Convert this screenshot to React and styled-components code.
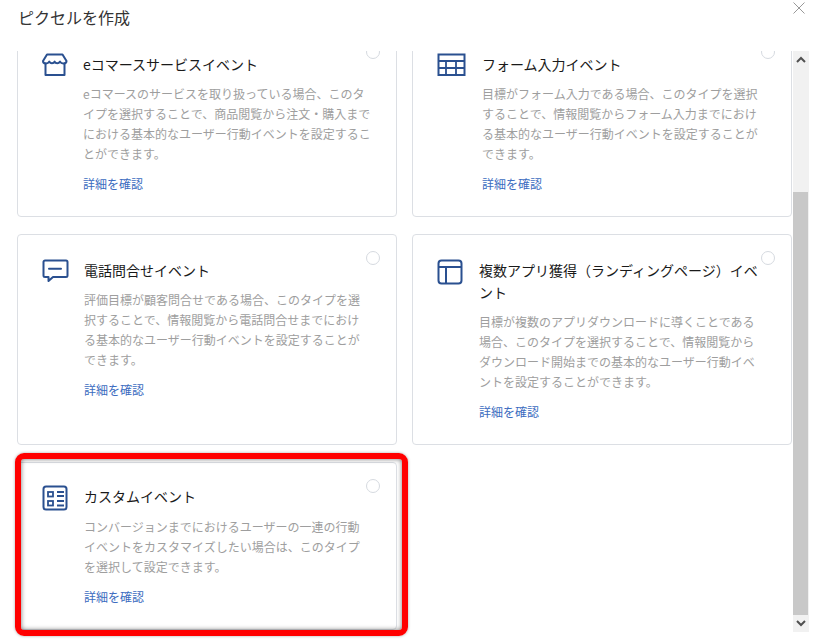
import React from 'react';
import styled, { createGlobalStyle } from 'styled-components';

const Global = createGlobalStyle`
  html, body { margin: 0; padding: 0; background: #fff; overflow: hidden; }
  body { font-family: "Noto Sans CJK JP", "Liberation Sans", sans-serif; }
`;

const Modal = styled.div`
  position: relative;
  width: 817px;
  height: 643px;
  display: flex;
  flex-direction: column;
  overflow: hidden;
  background: #fff;
`;

const Header = styled.header`
  height: 51px;
  flex: none;
  display: flex;
  justify-content: space-between;
  align-items: flex-start;
  padding: 6px 12px 0 18px;
  box-sizing: border-box;
`;

const Title = styled.h2`
  margin: 0;
  font-size: 16px;
  line-height: 22px;
  font-weight: 400;
  color: #333;
`;

const Close = styled.button`
  border: 0;
  background: none;
  padding: 0;
  margin-top: -4px;
  width: 12px;
  height: 12px;
  color: #999;
  display: flex;
`;

const Body = styled.div`
  flex: none;
  height: 581px;
  display: flex;
  padding-left: 17px;
  box-sizing: border-box;
`;

const Scroller = styled.div`
  width: 776px;
  flex: none;
  overflow: hidden;
`;

const Grid = styled.div`
  display: grid;
  grid-template-columns: 380px 380px;
  column-gap: 15px;
  row-gap: 17px;
  align-items: stretch;
  margin-top: -23px;
`;

const Card = styled.section`
  position: relative;
  box-sizing: border-box;
  border: 1px solid #dcdfe4;
  border-radius: 4px;
  padding: 24px 24px 22px 24px;
  display: flex;
  align-items: flex-start;
  background: #fff;
`;

const IconSlot = styled.div`
  flex: none;
  width: ${p => p.$width}px;
  color: #2a5090;
  display: flex;
  margin-top: ${p => (p.$raised ? -2 : 0)}px;
`;

const Content = styled.div`
  min-width: 0;
  width: 290px;
`;

const CardTitle = styled.h3`
  margin: ${p => (p.$raised ? '-2px 0 10px' : '0 0 9px')};
  font-size: 14px;
  line-height: 22px;
  font-weight: 400;
  color: #1a1a1a;
`;

const Description = styled.p`
  margin: 0 0 10px;
  font-size: 12px;
  line-height: 20px;
  color: #9e9e9e;
`;

const Line = styled.span`
  display: block;
  white-space: nowrap;
`;

const DetailLink = styled.a`
  display: block;
  font-size: 12px;
  line-height: 20px;
  color: #3c6cc0;
  text-decoration: none;
`;

const Radio = styled.span`
  position: absolute;
  top: 16px;
  right: 16px;
  width: 14px;
  height: 14px;
  border: 1px solid #d6dae0;
  border-radius: 50%;
  box-sizing: border-box;
`;

const Track = styled.div`
  width: 16px;
  flex: none;
  height: 581px;
  box-sizing: border-box;
  background: #f1f1f1;
  display: flex;
  flex-direction: column;
`;

const Arrow = styled.div`
  height: ${p => p.$h}px;
  flex: none;
  color: #505050;
  display: flex;
  align-items: center;
  justify-content: center;
`;

const TrackSpace = styled.div`
  flex: none;
  height: 124px;
`;

const Thumb = styled.div`
  flex: none;
  height: 423px;
  width: 15px;
  background: #c8c8c8;
`;

const Highlight = styled.div`
  position: absolute;
  left: 15px;
  top: 453px;
  width: 393px;
  height: 183px;
  box-sizing: border-box;
  border: 6px solid #f00;
  border-radius: 9px;
  box-shadow: inset 0 0 5px rgba(0, 0, 0, 0.55), 0 0 3px rgba(0, 0, 0, 0.35);
  pointer-events: none;
`;

const IcoSvg = styled.svg`
  overflow: visible;
  flex: none;
`;

const Ico = ({ children }) => (
  <IcoSvg width="26" height="26" viewBox="0 0 26 26" fill="none" stroke="currentColor" strokeWidth="2" strokeLinejoin="round" strokeLinecap="round">
    {children}
  </IcoSvg>
);

const Store = () => (
  <Ico>
    <path d="M5 1.500h15.500l4 6.500c0 3-5 3.500-6.500 .6c-1.300 2.300-4.300 2.300-5.400 0c-1.100 2.300-4.100 2.300-5.400 0C5.700 11.500 1 11 1 8z" />
    <path d="M3.500 10.500V22h19V10.500" />
  </Ico>
);

const TableIcon = () => (
  <Ico>
    <rect x="1.500" y="1.500" width="26" height="20.500" strokeLinejoin="miter" />
    <path d="M1.500 8h26M1.500 15h26M9 8v14M19 8v14" strokeLinecap="butt" strokeWidth="1.800" />
  </Ico>
);

const Chat = () => (
  <Ico>
    <path d="M3 1.500h21a1.500 1.500 0 0 1 1.500 1.500v13.500a1.500 1.500 0 0 1-1.500 1.500H11l-4.500 4v-4H3A1.500 1.500 0 0 1 1.500 16.500V3A1.500 1.500 0 0 1 3 1.500z" />
    <path d="M7 9.700h12" />
  </Ico>
);

const Layout = () => (
  <Ico>
    <rect x="1.500" y="1.500" width="23" height="23" rx="3" />
    <path d="M1.500 8h23M9 8v16.500" strokeLinecap="butt" />
  </Ico>
);

const ListIcon = () => (
  <Ico>
    <rect x="1.500" y="1.500" width="23" height="23" rx="2.500" />
    <rect x="6" y="7" width="5" height="4.500" strokeWidth="1.800" strokeLinejoin="miter" />
    <rect x="6" y="16" width="5" height="4.500" strokeWidth="1.800" strokeLinejoin="miter" />
    <path d="M15 7h7M15 11h7M15 16h7M15 20.500h7" strokeWidth="1.800" strokeLinecap="butt" />
  </Ico>
);

const cards = [
  {
    icon: <Store />, offset: 41, title: ['eコマースサービスイベント'],
    lines: ['eコマースのサービスを取り扱っている場合、このタ', 'イプを選択することで、商品閲覧から注文・購入まで', 'における基本的なユーザー行動イベントを設定するこ', 'とができます。'],
  },
  {
    icon: <TableIcon />, offset: 45, title: ['フォーム入力イベント'],
    lines: ['目標がフォーム入力である場合、このタイプを選択', 'することで、情報閲覧からフォーム入力までにおけ', 'る基本的なユーザー行動イベントを設定することが', 'できます。'],
  },
  {
    icon: <Chat />, offset: 42, title: ['電話問合せイベント'],
    lines: ['評価目標が顧客問合せである場合、このタイプを選', '択することで、情報閲覧から電話問合せまでにおけ', 'る基本的なユーザー行動イベントを設定することが', 'できます。'],
  },
  {
    icon: <Layout />, offset: 42, title: ['複数アプリ獲得（ランディングページ）イベ', 'ント'],
    lines: ['目標が複数のアプリダウンロードに導くことである', '場合、このタイプを選択することで、情報閲覧から', 'ダウンロード開始までの基本的なユーザー行動イベ', 'ントを設定することができます。'],
  },
  {
    icon: <ListIcon />, offset: 42, raised: true, title: ['カスタムイベント'],
    lines: ['コンバージョンまでにおけるユーザーの一連の行動', 'イベントをカスタマイズしたい場合は、このタイプ', 'を選択して設定できます。'],
  },
];

export default function App() {
  return (
    <Modal>
      <Global />
      <Header>
        <Title>ピクセルを作成</Title>
        <Close aria-label="閉じる">
          <svg width="12" height="12" viewBox="0 0 12 12" stroke="currentColor" strokeWidth="1" fill="none">
            <path d="M.5 .5l11 11M11.500 .5l-11 11" />
          </svg>
        </Close>
      </Header>
      <Body>
        <Scroller>
          <Grid>
            {cards.map(c => (
              <Card key={c.title[0]}>
                <IconSlot $width={c.offset} $raised={c.raised}>{c.icon}</IconSlot>
                <Content>
                  <CardTitle $raised={c.raised}>{c.title.map(t => <Line key={t}>{t}</Line>)}</CardTitle>
                  <Description>{c.lines.map(l => <Line key={l}>{l}</Line>)}</Description>
                  <DetailLink href="#">詳細を確認</DetailLink>
                </Content>
                <Radio />
              </Card>
            ))}
          </Grid>
        </Scroller>
        <Track>
          <Arrow $h={17}>
            <svg width="10" height="7" viewBox="0 0 10 7" fill="none" stroke="currentColor" strokeWidth="2">
              <path d="M1 6l4-4 4 4" />
            </svg>
          </Arrow>
          <TrackSpace />
          <Thumb />
          <Arrow $h={17}>
            <svg width="10" height="7" viewBox="0 0 10 7" fill="none" stroke="currentColor" strokeWidth="2">
              <path d="M1 1l4 4 4-4" />
            </svg>
          </Arrow>
        </Track>
      </Body>
      <Highlight />
    </Modal>
  );
}
